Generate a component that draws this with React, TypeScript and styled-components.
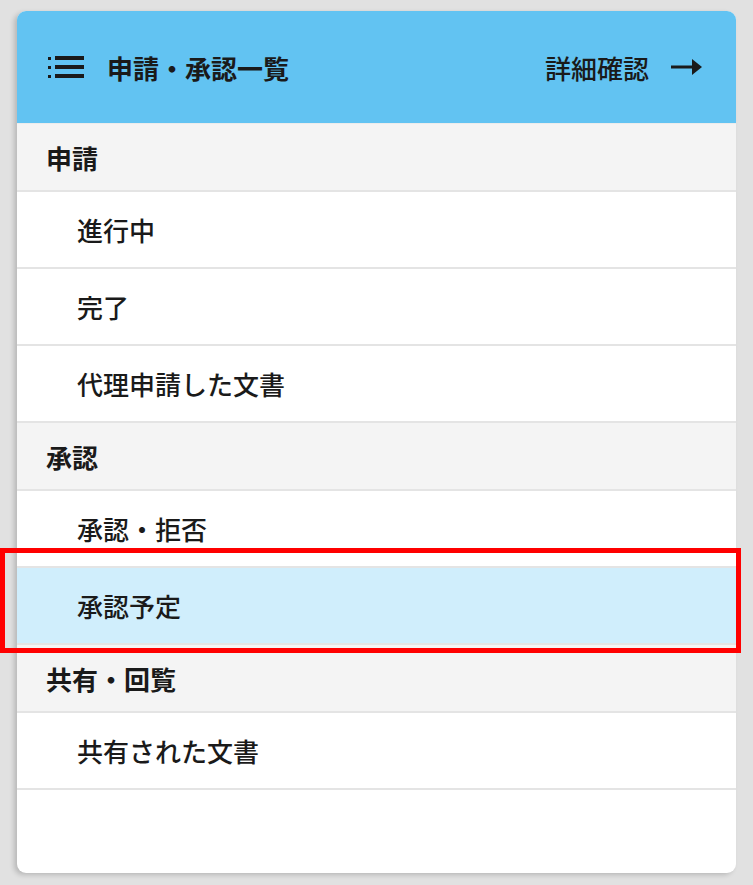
import React from "react";
import styled, { createGlobalStyle } from "styled-components";

const GlobalStyle = createGlobalStyle`
  html, body {
    margin: 0;
    padding: 0;
    background: #e1e1e1;
    font-family: "Noto Sans CJK JP", "Noto Sans", sans-serif;
    color: #1a1a1a;
  }
`;

const Page = styled.div`
  position: relative;
  width: 753px;
  height: 885px;
  padding: 11px 17px 12px 17px;
  box-sizing: border-box;
`;

const Card = styled.div`
  height: 100%;
  background: #fff;
  border-radius: 9px;
  overflow: hidden;
  box-shadow: -3px 2px 5px rgba(0, 0, 0, 0.18);
  display: flex;
  flex-direction: column;
`;

const Header = styled.div`
  height: 112px;
  flex: none;
  background: #62c3f2;
  display: flex;
  align-items: center;
  justify-content: space-between;
  padding: 0 34px 0 31px;
  border-bottom: 1px solid #ececec;
`;

const Title = styled.div`
  display: flex;
  align-items: center;
  gap: 23px;
  font-size: 26px;
  font-weight: 700;
`;

const DetailLink = styled.a`
  display: flex;
  align-items: center;
  gap: 22px;
  font-size: 26px;
  font-weight: 500;
  color: #1a1a1a;
  text-decoration: none;
`;

const Row = styled.div<{ $kind: "section" | "item"; $active?: boolean }>`
  flex: none;
  display: flex;
  align-items: center;
  box-sizing: border-box;
  height: ${(p) => (p.$kind === "section" ? "68px" : "77px")};
  padding-left: ${(p) => (p.$kind === "section" ? "29px" : "60px")};
  font-size: 26px;
  font-weight: ${(p) => (p.$kind === "section" ? 700 : 500)};
  background: ${(p) =>
    p.$active ? "#d0eefc" : p.$kind === "section" ? "#f4f4f4" : "#fff"};
  border-bottom: 2px solid #e4e4e4;
`;

const Highlight = styled.div`
  position: absolute;
  left: 0;
  top: 548px;
  width: 741px;
  height: 105px;
  border: 5px solid #ff0000;
  box-sizing: border-box;
  pointer-events: none;
`;

const ListIcon = () => (
  <svg width="36" height="22" viewBox="0 0 36 22">
    <rect x="0" y="1" width="3" height="3" fill="#1a1a1a" />
    <rect x="0" y="10" width="3" height="3" fill="#1a1a1a" />
    <rect x="0" y="19" width="3" height="3" fill="#1a1a1a" />
    <rect x="7" y="0" width="29" height="4" fill="#1a1a1a" />
    <rect x="7" y="9" width="29" height="4" fill="#1a1a1a" />
    <rect x="7" y="18" width="29" height="4" fill="#1a1a1a" />
  </svg>
);

const ArrowIcon = () => (
  <svg width="31" height="16" viewBox="0 0 31 16">
    <rect x="0" y="6.5" width="24" height="3" fill="#1a1a1a" />
    <path d="M21 0 L31 8 L21 16 Z" fill="#1a1a1a" />
  </svg>
);

type Entry = { label: string; kind: "section" | "item"; active?: boolean };

const entries: Entry[] = [
  { label: "申請", kind: "section" },
  { label: "進行中", kind: "item" },
  { label: "完了", kind: "item" },
  { label: "代理申請した文書", kind: "item" },
  { label: "承認", kind: "section" },
  { label: "承認・拒否", kind: "item" },
  { label: "承認予定", kind: "item", active: true },
  { label: "共有・回覧", kind: "section" },
  { label: "共有された文書", kind: "item" },
];

export default function App() {
  return (
    <>
      <GlobalStyle />
      <Page>
        <Card>
          <Header>
            <Title>
              <ListIcon />
              申請・承認一覧
            </Title>
            <DetailLink href="#">
              詳細確認
              <ArrowIcon />
            </DetailLink>
          </Header>
          {entries.map((e) => (
            <Row key={e.label} $kind={e.kind} $active={e.active}>
              {e.label}
            </Row>
          ))}
        </Card>
        <Highlight />
      </Page>
    </>
  );
}
